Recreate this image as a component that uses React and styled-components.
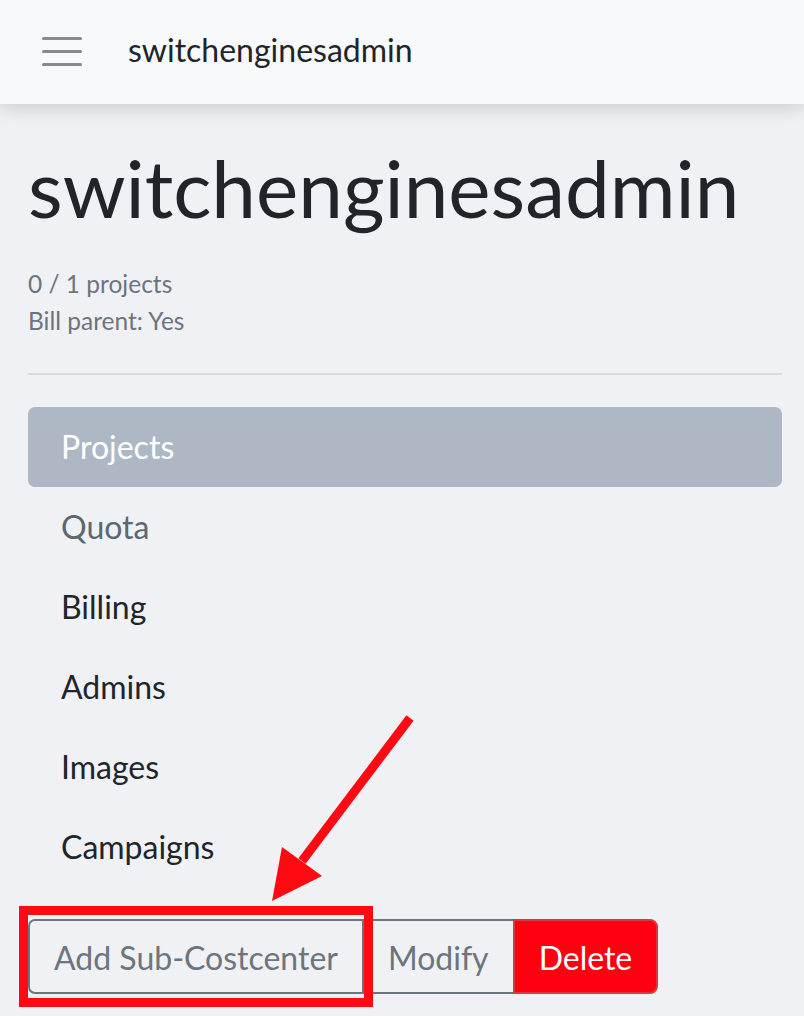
import React from 'react';
import styled, { createGlobalStyle } from 'styled-components';

const GlobalStyle = createGlobalStyle`
    html, body {
        margin: 0;
        padding: 0;
        background: #eff1f5;
        font-family: Lato, "Open Sans", sans-serif;
        color: #212529;
    }
`

export default function App() {
    const tabs = [
        { label: 'Projects', active: true },
        { label: 'Quota', muted: true },
        { label: 'Billing' },
        { label: 'Admins' },
        { label: 'Images' },
        { label: 'Campaigns' },
    ];

    return (
        <>
        <GlobalStyle />
        <Page>
            <Header>
                <Burger aria-label="menu">
                    <span /><span /><span />
                </Burger>
                <Brand>switchenginesadmin</Brand>
            </Header>

            <Main>
                <Title>switchenginesadmin</Title>
                <Meta>
                    <div>0 / 1 projects</div>
                    <div>Bill parent: Yes</div>
                </Meta>
                <Divider />

                <Tabs>
                    {tabs.map(t => (
                        <Tab key={t.label} active={t.active} muted={t.muted}>{t.label}</Tab>
                    ))}
                </Tabs>

                <ButtonGroup>
                    <OutlineButton first>Add Sub-Costcenter</OutlineButton>
                    <OutlineButton>Modify</OutlineButton>
                    <DangerButton>Delete</DangerButton>
                    <Highlight />
                </ButtonGroup>
            </Main>

            {/* annotation arrow pointing at the highlighted button */}
            <Arrow width="160" height="210" viewBox="0 0 160 210">
                <line x1="150" y1="18" x2="42" y2="161" stroke="#ff0a12" strokeWidth="9" />
                <polygon points="22,147 62,176 12,201" fill="#ff0a12" />
            </Arrow>
        </Page>
        </>
    )
}

const Page = styled.div`
    min-height: 1016px;
    position: relative;
    overflow: hidden;
`

const Header = styled.header`
    display: flex;
    align-items: center;
    height: 104px;
    padding-left: 42px;
    background: #f8f9fa;
    box-shadow: 0 4px 18px rgba(0, 0, 0, 0.16);
    position: relative;
    z-index: 1;
`

const Burger = styled.div`
    display: flex;
    flex-direction: column;
    justify-content: space-between;
    width: 40px;
    height: 29px;
    margin-top: -1px;

    span {
        display: block;
        height: 3px;
        border-radius: 2px;
        background: #8a8a8a;
    }
`

const Brand = styled.div`
    margin-left: 46px;
    margin-top: -4px;
    font-size: 32px;
    line-height: 1.5;
    color: #212529;
`

const Main = styled.main`
    padding: 35px 22px 0 28px;
`

const Title = styled.h1`
    margin: 0;
    font-size: 80px;
    font-weight: 400;
    line-height: 1.2;
    color: #212529;
`

const Meta = styled.div`
    margin-top: 31px;
    font-size: 24.5px;
    line-height: 1.5;
    color: #6c757d;
`

const Divider = styled.hr`
    margin: 33px 0 32px;
    border: 0;
    border-top: 2px solid #d9dadd;
`

const Tabs = styled.nav`
    display: flex;
    flex-direction: column;
`

const Tab = styled.a`
    display: block;
    padding: 16px 33px;
    font-size: 32px;
    line-height: 48px;
    border-radius: 7px;
    background: ${p => p.active ? '#adb8c4' : 'transparent'};
    color: ${p => p.active ? '#ffffff' : p.muted ? '#5b6772' : '#212529'};
`

const ButtonGroup = styled.div`
    position: relative;
    display: inline-flex;
    margin-top: 32px;
`

const BaseButton = styled.button`
    font-family: inherit;
    font-size: 32px;
    line-height: 48px;
    padding: 13px 24px 10px;
    border: 2px solid #6c757d;
    background: transparent;
    cursor: pointer;
`

const OutlineButton = styled(BaseButton)`
    color: #6c757d;
    border-radius: ${p => p.first ? '7px 0 0 7px' : '0'};
    margin-left: ${p => p.first ? '0' : '-2px'};
`

const DangerButton = styled(BaseButton)`
    color: #ffffff;
    background: #ff0010;
    border-color: #dc3545;
    border-radius: 0 8px 8px 0;
    margin-left: -2px;
`

const Highlight = styled.div`
    position: absolute;
    left: -9px;
    top: -13px;
    width: 336px;
    height: 83px;
    border: 9px solid #ff0a12;
    pointer-events: none;
`

const Arrow = styled.svg`
    position: absolute;
    left: 260px;
    top: 700px;
`
